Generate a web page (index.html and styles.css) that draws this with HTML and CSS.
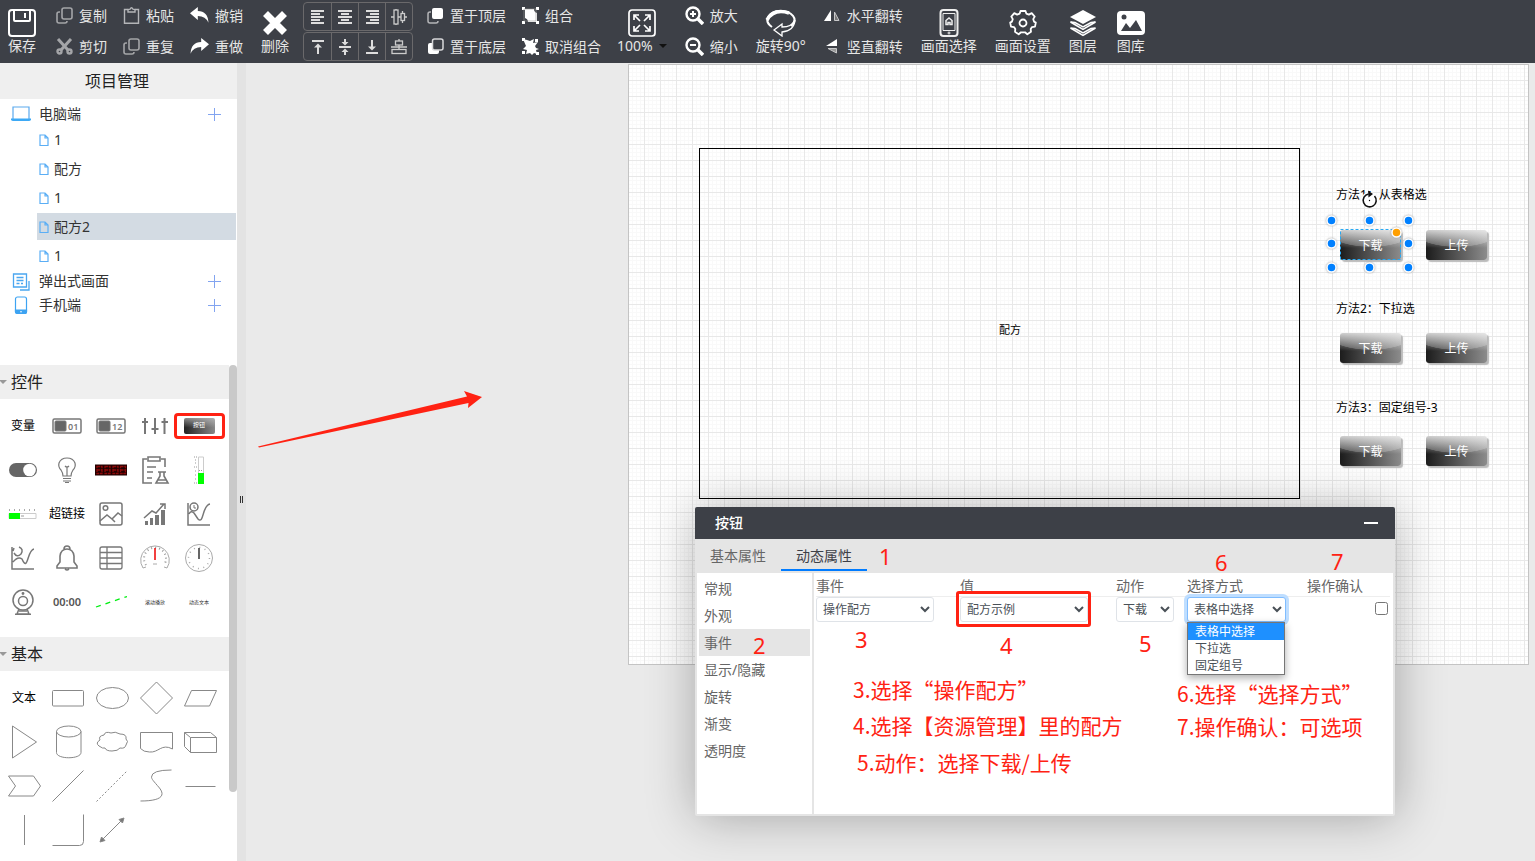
FILE: index.html
```html
<!DOCTYPE html>
<html lang="zh-CN">
<head>
<meta charset="utf-8">
<title>画面编辑器</title>
<link rel="stylesheet" href="styles.css">
</head>
<body>
<header class="toolbar">
  <button class="tool">
    <svg width="28" height="28" viewBox="0 0 28 28" fill="none" stroke="#fff" stroke-width="2"><rect x="1" y="1" width="26" height="26" rx="3"/><path d="M6 1v10q0 1 1 1h14q1 0 1-1V1M17 4v5"/></svg>
    <span>保存</span>
  </button>
  <div class="pair space-l">
    <button class="mini"><svg class="ic" viewBox="0 0 17 17" fill="none" stroke="#a4a5a8" stroke-width="1.6"><rect x="6" y="1" width="10" height="11" rx="2"/><path d="M4 5H3q-2 0-2 2v7q0 2 2 2h6q2 0 2-2"/></svg>复制</button>
    <button class="mini"><svg class="ic" viewBox="0 0 17 17" fill="none" stroke="#a4a5a8" stroke-width="3"><path d="M2 1l10 11M15 1L5 12"/><circle cx="3.5" cy="13.5" r="2" stroke-width="2.4"/><circle cx="13.5" cy="13.5" r="2" stroke-width="2.4"/></svg>剪切</button>
  </div>
  <div class="pair space-s">
    <button class="mini"><svg class="ic" viewBox="0 0 17 17" fill="none" stroke="#b4b5b8" stroke-width="1.4"><path d="M5 2.5H1.5v13.8h14V2.5H12M5 5V2.5l2-.3q1.5-3 3 0l2 .3V5z"/></svg>粘贴</button>
    <button class="mini"><svg class="ic" viewBox="0 0 17 17" fill="none" stroke="#a4a5a8" stroke-width="1.6"><rect x="6" y="1" width="10" height="11" rx="2"/><path d="M4 5H3q-2 0-2 2v7q0 2 2 2h6q2 0 2-2"/></svg>重复</button>
  </div>
  <div class="pair space-s">
    <button class="mini"><svg class="ic ic-w" viewBox="0 0 17 17" fill="#fff"><path d="M0 6.500L7 1v3.500q9 0 9.500 10.500Q14 9 7 9v3.500z"/></svg>撤销</button>
    <button class="mini"><svg class="ic ic-w" viewBox="0 0 17 17" fill="#fff"><path d="M17 6.500L10 1v3.500Q1 4.500 .5 15 3 9 10 9v3.500z"/></svg>重做</button>
  </div>
  <button class="tool space-m">
    <svg width="28" height="28" viewBox="0 0 28 28" stroke="#fff" stroke-width="7"><path d="M4.500 4.500l19 19M23.500 4.500l-19 19"/></svg>
    <span>删除</span>
  </button>
  <div class="pair align space-xs">
    <div class="strip">
      <button aria-label="左对齐"><svg viewBox="0 0 16 16" stroke="#ddd" stroke-width="2"><path d="M1 2h13M1 5h9M1 8h13M1 11h9M1 14h13"/></svg></button>
      <button aria-label="水平居中"><svg viewBox="0 0 16 16" stroke="#ddd" stroke-width="2"><path d="M1 2h14M4 5h8M1 8h14M4 11h8M1 14h14"/></svg></button>
      <button aria-label="右对齐"><svg viewBox="0 0 16 16" stroke="#ddd" stroke-width="2"><path d="M2 2h13M6 5h9M2 8h13M6 11h9M2 14h13"/></svg></button>
      <button aria-label="水平分布"><svg viewBox="0 0 16 16" fill="none" stroke="#ccc" stroke-width="1.3"><path d="M0 8h3M7 8h3M13 8h3M5 0v1M5 15v1M11.500 2v2M11.500 12v2"/><rect x="3" y="1" width="4" height="14"/><rect x="10" y="4.500" width="3.500" height="7"/></svg></button>
    </div>
    <div class="strip">
      <button aria-label="顶对齐"><svg viewBox="0 0 16 16" fill="#ddd" stroke="#ddd" stroke-width="2"><path d="M2 2h12M8 15V7"/><path d="M4 8.500l4-4 4 4z" stroke="none"/></svg></button>
      <button aria-label="垂直居中"><svg viewBox="0 0 16 16" fill="#ddd" stroke="#ddd" stroke-width="2"><path d="M2 8h12M8 0v4M8 12v4"/><path d="M4.500 3h7L8 6.500zM4.500 13h7L8 9.500z" stroke="none"/></svg></button>
      <button aria-label="底对齐"><svg viewBox="0 0 16 16" fill="#ddd" stroke="#ddd" stroke-width="2"><path d="M2 14h12M8 1v8"/><path d="M4 7.500h8l-4 4z" stroke="none"/></svg></button>
      <button aria-label="垂直分布"><svg viewBox="0 0 16 16" fill="none" stroke="#ccc" stroke-width="1.3"><path d="M8 0v2M8 6v4M0 8h3M13 8h3M3 8h10"/><rect x="4.500" y="2" width="7" height="4"/><rect x="1" y="10.500" width="14" height="4"/></svg></button>
    </div>
  </div>
  <div class="pair space-xs">
    <button class="mini"><svg class="ic" viewBox="0 0 17 17" fill="none" stroke="#b4b5b8" stroke-width="1.5"><path d="M4 5H3q-2 0-2 2v7q0 2 2 2h6q2 0 2-2"/><rect x="5" y="1" width="11" height="11" rx="2" fill="#fff" stroke="none"/></svg>置于顶层</button>
    <button class="mini"><svg class="ic" viewBox="0 0 17 17" fill="none" stroke="#d8d8da" stroke-width="1.5"><rect x="1" y="5" width="11" height="11" rx="2" fill="#fff" stroke="none"/><rect x="5.500" y="1" width="10.500" height="11" rx="2" fill="#3d4047"/></svg>置于底层</button>
  </div>
  <div class="pair space-s">
    <button class="mini"><svg class="ic" viewBox="0 0 17 17" fill="#fff"><path d="M3 2h9q0 3 3 4v9H6q0-3-3-4z"/><path d="M0 0h3v3H0zM14 0h3v3h-3zM0 14h3v3H0zM14 14h3v3h-3z"/><path d="M2 2h12v12H2z" fill="none" stroke="#999" stroke-width=".6"/></svg>组合</button>
    <button class="mini"><svg class="ic" viewBox="0 0 17 17" fill="#fff"><path d="M1 1l4 1 3 1 4-2-1 4 5-1-3 4 1 2 3 1-3 1 1 4-3-1-2 2-2-2-4 1 1-4-4-1 3-3z"/><path d="M0 0h3v3H0zM13 1h3v3h-3zM0 13h3v3H0zM14 14h3v3h-3z"/></svg>取消组合</button>
  </div>
  <button class="tool space-s">
    <svg width="28" height="28" viewBox="0 0 28 28" fill="none" stroke="#fff" stroke-width="1.7"><rect x="1" y="1" width="26" height="26" rx="3"/><path d="M12 12L6 6M6 11V6h5M16 12l6-6M17 6h5v5M12 16l-6 6M6 17v5h5M16 16l6 6M22 17v5h-5"/></svg>
    <span>100% <i class="caret"></i></span>
  </button>
  <div class="pair space-m">
    <button class="mini"><svg class="ic ic-w" viewBox="0 0 19 19" fill="none" stroke="#fff" stroke-width="2.4"><circle cx="8" cy="8" r="6.500"/><path d="M8 5v6M5 8h6" stroke-width="2"/><path d="M13 13l5 5" stroke-width="3.500"/></svg>放大</button>
    <button class="mini"><svg class="ic ic-w" viewBox="0 0 19 19" fill="none" stroke="#fff" stroke-width="2.4"><circle cx="8" cy="8" r="6.500"/><path d="M5 8h6" stroke-width="2"/><path d="M13 13l5 5" stroke-width="3.500"/></svg>缩小</button>
  </div>
  <button class="tool space-m">
    <svg width="32" height="28" viewBox="0 0 32 28" fill="none" stroke="#fff"><path d="M7 18C-3 11 5 2 15 2c12 0 19 8 11 15" stroke-width="2"/><path d="M2 11Q9-1 24 4" stroke-width="3.500"/><path d="M9 21l8-6v3q10 0 13-7-1 11-13 12v4z" stroke-width="1.3"/></svg>
    <span>旋转90°</span>
  </button>
  <div class="pair space-m">
    <button class="mini"><svg class="ic" viewBox="0 0 17 17" fill="#fff"><path d="M7 3v11H0z"/><path d="M10.500 5v8.500H15z" fill="#777" stroke="#c8c8ca"/></svg>水平翻转</button>
    <button class="mini"><svg class="ic" viewBox="0 0 17 17" fill="#fff"><path d="M2 8h11V1z"/><path d="M4 10.500h8.500V15z" fill="#999" stroke="#c8c8ca"/></svg>竖直翻转</button>
  </div>
  <button class="tool space-m">
    <svg width="28" height="28" viewBox="0 0 28 28" fill="none" stroke="#eee" stroke-width="2"><rect x="5.500" y="1" width="17" height="26" rx="3"/><path d="M8 4.500h12v17H8z" stroke-width="1"/><path d="M11 15.500v-4L14 9l3 2.500v4h-2v-2h-2v2z" stroke-width="1.500"/><circle cx="14" cy="24" r="1" stroke-width="1"/></svg>
    <span>画面选择</span>
  </button>
  <button class="tool space-m">
    <svg width="28" height="28" viewBox="-14 -14 28 28" fill="none" stroke="#fff" stroke-width="1.8" stroke-linejoin="round"><path d="M-2.500-12h5l.8 2.600 2.600 1 2.800-1.500 3 3.500-1.500 2.500 .8 2.500 1.800 1-.8 4-3 .5-1.300 2 .3 2.700-3.700 2.500-2.300-2h-4l-2.300 2-3.700-2.500.3-2.700L-9 4.100l-3-.5-.8-4 1.800-1 .8-2.500-1.500-2.500 3-3.500 2.800 1.500 2.600-1z"/><circle r="3.500"/></svg>
    <span>画面设置</span>
  </button>
  <button class="tool space-m">
    <svg width="28" height="28" viewBox="0 0 28 28" fill="none" stroke="#fff"><path d="M14 1l13 7-13 7L1 8z" fill="#fff" stroke="none"/><path d="M1.500 13l4.500.5 8 4.500 8-4.500 4.500-.5L14 20.500zM1.500 19l4.500.5 8 4.500 8-4.500 4.500-.5L14 26.500z" stroke-width="1.500"/></svg>
    <span>图层</span>
  </button>
  <button class="tool space-l">
    <svg width="28" height="28" viewBox="0 0 28 28"><rect y="2" width="28" height="24" rx="4" fill="#fff"/><circle cx="7" cy="8" r="2.500" fill="#3d4047"/><path d="M4 22l5-8 4 5 6-8 6 11z" fill="#3d4047"/></svg>
    <span>图库</span>
  </button>
</header>

<main class="main">
  <aside class="sidebar">
    <h1 class="side-title">项目管理</h1>
    <nav class="tree">
      <div class="branch">
        <svg class="bi" viewBox="0 0 20 20" fill="none" stroke="#5aa9ee" stroke-width="1.2"><path d="M2 15V3h16v12"/><path d="M0 14.500h20V16q-1 1-2 1H2q-1 0-2-1z" fill="#3da9f5" stroke="none"/></svg>
        <span>电脑端</span><button class="add" aria-label="添加电脑端画面"></button>
      </div>
      <a class="leaf" href="#"><svg class="fi" viewBox="0 0 10 12" fill="none" stroke="#5aaef5" stroke-width="1.2"><path d="M1 1h5l3 3v7.500H1zM6 1v3h3"/></svg>1</a>
      <a class="leaf" href="#"><svg class="fi" viewBox="0 0 10 12" fill="none" stroke="#5aaef5" stroke-width="1.2"><path d="M1 1h5l3 3v7.500H1zM6 1v3h3"/></svg>配方</a>
      <a class="leaf" href="#"><svg class="fi" viewBox="0 0 10 12" fill="none" stroke="#5aaef5" stroke-width="1.2"><path d="M1 1h5l3 3v7.500H1zM6 1v3h3"/></svg>1</a>
      <a class="leaf current" href="#"><svg class="fi" viewBox="0 0 10 12" fill="none" stroke="#5aaef5" stroke-width="1.2"><path d="M1 1h5l3 3v7.500H1zM6 1v3h3"/></svg>配方2</a>
      <a class="leaf" href="#"><svg class="fi" viewBox="0 0 10 12" fill="none" stroke="#5aaef5" stroke-width="1.2"><path d="M1 1h5l3 3v7.500H1zM6 1v3h3"/></svg>1</a>
      <div class="branch">
        <svg class="bi" viewBox="0 0 20 20" fill="none" stroke="#4aa6f0" stroke-width="1.3"><path d="M2.500 3h13v13h-13zM18 10v9H9"/><path d="M5.500 6.500h7M5.500 9.500h7M5.500 12.500h3M10 12.500h2"/></svg>
        <span>弹出式画面</span><button class="add" aria-label="添加弹出式画面"></button>
      </div>
      <div class="branch">
        <svg class="bi" viewBox="0 0 20 20" fill="none" stroke="#3da3f2" stroke-width="1.2"><rect x="4.500" y="2" width="11" height="16.500" rx="2"/><path d="M4.500 15h11v2q0 1.500-2 1.500h-7q-2 0-2-1.500z" fill="#3da3f2"/><circle cx="10" cy="16.700" r=".8" fill="#fff" stroke="none"/></svg>
        <span>手机端</span><button class="add" aria-label="添加手机端画面"></button>
      </div>
    </nav>

    <section class="library">
      <div class="shelves">
        <h2 class="shelf-title">控件</h2>
        <div class="palette">
          <button class="cell">变量</button>
          <button class="cell"><svg viewBox="0 0 32 32" fill="none" stroke="#777"><rect x="2" y="9" width="28" height="14" rx="1.500" stroke-width="1.500"/><rect x="4" y="11" width="11" height="10" rx="1" fill="#666"/><text x="17" y="19.500" class="num">01</text></svg></button>
          <button class="cell"><svg viewBox="0 0 32 32" fill="none" stroke="#777"><rect x="2" y="9" width="28" height="14" rx="1.500" stroke-width="1.500"/><rect x="4" y="11" width="11" height="10" rx="1" fill="#666"/><text x="17" y="19.500" class="num">12</text></svg></button>
          <button class="cell" aria-label="滑块"><svg viewBox="0 0 32 32" stroke="#777" stroke-width="2"><path d="M6 8v16M16 8v16M25.500 8v16M3 12h6M12.500 19h7M22.500 12h6.500"/></svg></button>
          <button class="cell marked"><span class="thumb-button">按钮</span></button>
          <button class="cell" aria-label="开关"><svg viewBox="0 0 32 32"><rect x="2" y="9" width="28" height="14" rx="7" fill="#666"/><circle cx="22.500" cy="16" r="6.300" fill="#fff"/></svg></button>
          <button class="cell" aria-label="指示灯"><svg viewBox="0 0 32 32" fill="none" stroke="#777" stroke-width="1.2"><path d="M12 22q0-3-2-6-3-3-2-7 2-5 8-5t8 5q1 4-2 7-2 3-2 6zM16 13v9M14 12q2 2 4 0M12 24.500h8M12 27h8M14 28.500h4"/></svg></button>
          <button class="cell" aria-label="数码管"><svg viewBox="0 0 32 32"><path fill="#200" d="M0 10.500h32v11H0z"/><path fill="none" stroke="#8c0808" stroke-width="1.3" stroke-dasharray="3 .7" d="M2 12.500h5v7H2zM2 16h5M10 12.500h5v7h-5zM10 16h5M18 12.500h5v7h-5zM18 16h5M25.500 12.500h5v7h-5zM25.500 16h5"/></svg></button>
          <button class="cell" aria-label="报表"><svg viewBox="0 0 32 32" fill="none" stroke="#777" stroke-width="1.6"><path d="M8 5H4v24h9M22 5h4v8M9 3h12v4H9zM8 13h9M8 18h6M8 24h5M19 18h8M21 18v4l-4 7h12l-4-7v-4M19 26h8"/></svg></button>
          <button class="cell" aria-label="竖向液位"><svg viewBox="0 0 32 32"><path fill="none" stroke="#ccc" d="M15.500 3v26h5V3z"/><path stroke="#999" d="M16 16.500h4M11 3h3M12 6h2M12 9h2M11 13h3M12 17h2M12 21h2M12 25h2M11 29h3" stroke-dasharray="1 1"/><path fill="#0f0" d="M15 19h6v11h-6z"/></svg></button>
          <button class="cell" aria-label="横向液位"><svg viewBox="0 0 32 32"><path fill="none" stroke="#ccc" d="M2 15.500h27v5H2z"/><path stroke="#aaa" stroke-width="2" stroke-dasharray="1 4" d="M2 12h28"/><path fill="#0f0" d="M2 15h11v6H2z"/><path stroke="#999" d="M14 18h3"/></svg></button>
          <button class="cell">超链接</button>
          <button class="cell" aria-label="图片"><svg viewBox="0 0 32 32" fill="none" stroke="#777" stroke-width="1.5"><rect x="5" y="5" width="22" height="22" rx="2"/><circle cx="10.500" cy="10" r="2.300"/><path d="M5 23l7-6 5 4 6-6 4 3M17 21l3 3"/></svg></button>
          <button class="cell" aria-label="柱状图"><svg viewBox="0 0 32 32"><path fill="#777" d="M6 23h3v4H6zM11 20h3v7h-3zM16 17h4v10h-4zM22 12h4v15h-4z"/><path fill="none" stroke="#777" stroke-width="1.5" d="M5 20l8-7 4 2 8-9M21 6h5v5"/></svg></button>
          <button class="cell" aria-label="实时曲线"><svg viewBox="0 0 32 32" fill="none" stroke="#777" stroke-width="1.5"><path d="M5 5v22h22M6 16q2-4 5-1l4 6c6 6 4-14 12-15"/><circle cx="11" cy="9" r="4"/><path d="M11 7v3h2" stroke-width="1"/></svg></button>
          <button class="cell" aria-label="历史曲线"><svg viewBox="0 0 32 32" fill="none" stroke="#777" stroke-width="1.5"><path d="M5 5v22h22M6 20q5-6 9-3c6 14 5-9 12-10M7 11q3 5 7 1 3-5-2-7M6 9l1-3"/></svg></button>
          <button class="cell" aria-label="报警"><svg viewBox="0 0 32 32" fill="none" stroke="#777" stroke-width="1.6"><path d="M6 26v-2l3-4v-6q1-7 7-7t7 7v6l3 4v2zM13 7q0-3 3-3t3 3M14 27q2 2 4 0"/></svg></button>
          <button class="cell" aria-label="表格"><svg viewBox="0 0 32 32" fill="none" stroke="#777" stroke-width="1.3"><rect x="5" y="5" width="22" height="22" rx="2"/><path d="M5 10.500h22M5 16h22M5 21.500h22M12 5v22"/></svg></button>
          <button class="cell" aria-label="仪表盘"><svg viewBox="0 0 32 32" fill="none" stroke="#aaa"><path d="M4 26a14.300 14.300 0 1 1 24 0l-3-1M4 26l3-1"/><path stroke="#999" stroke-width="2" stroke-dasharray="1 3" d="M7 23a11 11 0 1 1 18 0"/><path d="M16 6v12" stroke="#e00" stroke-width="1.500"/><path d="M14 22h4"/></svg></button>
          <button class="cell" aria-label="时钟"><svg viewBox="0 0 32 32" fill="none" stroke="#aaa"><circle cx="16" cy="16" r="13.500"/><circle cx="16" cy="16" r="10.500" stroke-width="1.500" stroke-dasharray="1 4.500"/><path d="M16 6v11" stroke="#333" stroke-width="1.500"/></svg></button>
          <button class="cell" aria-label="摄像头"><svg viewBox="0 0 32 32" fill="none" stroke="#777" stroke-width="1.5"><circle cx="16" cy="14" r="10"/><circle cx="16" cy="15" r="4.500"/><circle cx="16" cy="7.500" r=".7"/><path d="M12 23l-2 5h12l-2-5M8 28.300h16M12 25h8"/></svg></button>
          <button class="cell time">00:00</button>
          <button class="cell" aria-label="流动线"><svg viewBox="0 0 32 32"><path d="M1 21L32 10.500" stroke="#0e1" stroke-width="1.3" stroke-dasharray="5 5"/></svg></button>
          <button class="cell tiny">滚动播放</button>
          <button class="cell tiny">动态文本</button>
        </div>
        <h2 class="shelf-title">基本</h2>
        <div class="palette shapes">
          <button class="cell">文本</button>
          <button class="cell" aria-label="矩形"><svg viewBox="0 0 34 34"><rect x="1.500" y="9.500" width="31" height="15.500" rx="1"/></svg></button>
          <button class="cell" aria-label="椭圆"><svg viewBox="0 0 34 34"><ellipse cx="17.500" cy="17" rx="16" ry="10.500"/></svg></button>
          <button class="cell" aria-label="菱形"><svg viewBox="0 0 34 34"><path d="M17.500 1l16 16-16 16-16-16z"/></svg></button>
          <button class="cell" aria-label="平行四边形"><svg viewBox="0 0 34 34"><path d="M8.500 9.500h25l-7 15.500h-25z"/></svg></button>
          <button class="cell" aria-label="三角形"><svg viewBox="0 0 34 34"><path d="M5.500 1v32l24-16z"/></svg></button>
          <button class="cell" aria-label="圆柱"><svg viewBox="0 0 34 34"><path d="M5.500 6.500v21c0 7 24.500 7 24.500 0v-21"/><ellipse cx="17.750" cy="6.500" rx="12.250" ry="5.500"/></svg></button>
          <button class="cell" aria-label="云"><svg viewBox="0 0 34 34"><path d="M9 10q-6 1-4 5-5 3-1 6 4 3 6 2 1 3 7 3 6 0 8-3 5 1 6-3 3-4 0-6 1-5-6-5-5-3-9-1-6-2-7 2z"/></svg></button>
          <button class="cell" aria-label="文档"><svg viewBox="0 0 34 34"><path d="M1.500 7.500h32V24c-11-6-14 4-23 3q-6 0-9-3.500z"/></svg></button>
          <button class="cell" aria-label="立方体"><svg viewBox="0 0 34 34"><path d="M1.500 7.500h26l6 5v15h-26l-6-6zM1.500 7.500l6 5h26M7.500 12.500v15"/></svg></button>
          <button class="cell" aria-label="步骤"><svg viewBox="0 0 34 34"><path d="M1.500 7h25l7 10-7 10h-25l7-10z"/></svg></button>
          <button class="cell" aria-label="直线"><svg viewBox="0 0 34 34"><path d="M1.500 32.500l31-31"/></svg></button>
          <button class="cell" aria-label="虚线"><svg viewBox="0 0 34 34"><path d="M1.500 32.500l31-31" stroke-dasharray="2 2"/></svg></button>
          <button class="cell" aria-label="曲线"><svg viewBox="0 0 34 34"><path d="M1.500 32c18 0 26-4 19-13-6-7-8-9-8-11q0-7 20-7"/></svg></button>
          <button class="cell" aria-label="水平线"><svg viewBox="0 0 34 34"><path d="M2.500 17.500h30"/></svg></button>
          <button class="cell" aria-label="垂直线"><svg viewBox="0 0 34 34"><path d="M17.500 2v30"/></svg></button>
          <button class="cell" aria-label="折线"><svg viewBox="0 0 34 34"><path d="M32.500 1.500v27q0 4-4 4h-27"/></svg></button>
          <button class="cell" aria-label="双向箭头"><svg viewBox="0 0 34 34"><path d="M6 28L28 6"/><path d="M29 5l-1.500 5-3.500-3.500zM5 29l1.500-5 3.500 3.500z" fill="#777"/></svg></button>
        </div>
      </div>
      <div class="scroll-track"><div class="scroll-thumb"></div></div>
    </section>
  </aside>

  <div class="splitter"><span class="grip"></span></div>

  <section class="stage">
    <svg class="pointer" viewBox="0 0 226 62"><path d="M0 59.500L209 9.500 206 4l18 6-14 11 .5-5L1 60.500z" fill="#ff2213"/></svg>
    <div class="sheet">
      <div class="frame"></div>
      <span class="note frame-name">配方</span>
      <span class="note label row1">方法1：从表格选</span>
      <button class="pill down row1">下载</button>
      <button class="pill up row1">上传</button>
      <span class="note label row2">方法2：下拉选</span>
      <button class="pill down row2">下载</button>
      <button class="pill up row2">上传</button>
      <span class="note label row3">方法3：固定组号-3</span>
      <button class="pill down row3">下载</button>
      <button class="pill up row3">上传</button>
      <svg class="selection" viewBox="0 0 96 90">
        <rect x="17.500" y="45.500" width="60" height="30" fill="none" stroke="#29a9f2" stroke-dasharray="3 2"/>
        <circle cx="46.500" cy="16" r="8" fill="#fff"/>
        <path d="M51.500 12a6.500 6.500 0 1 1-6-2" fill="none" stroke="#111" stroke-width="1.600"/>
        <path d="M45 6.500l5 3.500-4.500 3.500z" fill="#111"/><circle cx="46.500" cy="16.500" r=".7"/>
        <g class="handles"><circle cx="8.500" cy="36.500" r="4.500"/><circle cx="46.500" cy="36.500" r="4.500"/><circle cx="85.500" cy="36.500" r="4.500"/><circle cx="8.500" cy="59.500" r="4.500"/><circle cx="85.500" cy="59.500" r="4.500"/><circle cx="8.500" cy="83.500" r="4.500"/><circle cx="46.500" cy="83.500" r="4.500"/><circle cx="85.500" cy="83.500" r="4.500"/><circle class="orange" cx="73.500" cy="48.500" r="4.500"/></g>
      </svg>
    </div>

    <section class="dialog">
      <header class="dialog-head"><span>按钮</span><button class="minimize" aria-label="最小化"></button></header>
      <div class="tabs"><button class="tab">基本属性</button><button class="tab active">动态属性</button></div>
      <div class="dialog-body">
        <nav class="props">
          <button>常规</button><button>外观</button><button class="on">事件</button><button>显示/隐藏</button><button>旋转</button><button>渐变</button><button>透明度</button>
        </nav>
        <div class="detail">
          <table class="events">
            <thead><tr><th class="c-event">事件</th><th class="c-value">值</th><th class="c-action">动作</th><th class="c-mode">选择方式</th><th class="c-confirm">操作确认</th></tr></thead>
            <tbody><tr>
              <td><select class="s-event" aria-label="事件"><option>操作配方</option></select></td>
              <td><select class="s-value" aria-label="值"><option>配方示例</option></select></td>
              <td><select class="s-action" aria-label="动作"><option>下载</option><option>上传</option></select></td>
              <td class="mode-cell"><select class="s-mode" aria-label="选择方式"><option>表格中选择</option><option>下拉选</option><option>固定组号</option></select>
                <ul class="menu"><li class="picked">表格中选择</li><li>下拉选</li><li>固定组号</li></ul></td>
              <td class="confirm-cell"><input type="checkbox" aria-label="操作确认"></td>
            </tr></tbody>
          </table>
        </div>
      </div>
      <div class="red-box"></div>
      <span class="mark m1">1</span><span class="mark m2">2</span><span class="mark m3">3</span><span class="mark m4">4</span><span class="mark m5">5</span><span class="mark m6">6</span><span class="mark m7">7</span>
      <p class="tip t3">3.选择“操作配方”</p>
      <p class="tip t4">4.选择【资源管理】里的配方</p>
      <p class="tip t5">5.动作：选择下载/上传</p>
      <p class="tip t6">6.选择“选择方式”</p>
      <p class="tip t7">7.操作确认：可选项</p>
    </section>
  </section>
</main>
</body>
</html>
```
FILE: styles.css
```css
* { box-sizing: border-box; }
body {
  margin: 0;
  height: 100vh;
  display: flex;
  flex-direction: column;
  overflow: hidden;
  font: 14px/20px "Noto Sans", "Noto Sans CJK SC", sans-serif;
  color: #333;
}
button { font: inherit; color: inherit; background: none; border: 0; padding: 0; margin: 0; }
svg { display: block; flex: none; }
h1, h2, p, ul { margin: 0; padding: 0; font-weight: 400; list-style: none; }

/* toolbar */
.toolbar { height: 63px; flex: none; display: flex; padding-left: 8px; background: #3d4047; color: #e6e6e6; white-space: nowrap; }
.tool { display: flex; flex-direction: column; align-items: center; padding-top: 9px; }
.tool > svg { height: 28px; }
.tool span { line-height: 18px; display: flex; align-items: center; gap: 6px; }
.space-xs { margin-left: 14px; }
.space-s { margin-left: 16px; }
.space-m { margin-left: 18px; }
.space-l { margin-left: 20px; }
.caret { border: 4px solid transparent; border-top-color: #111; border-bottom: 0; }
.pair { display: flex; flex-direction: column; }
.mini { height: 31px; display: flex; align-items: center; gap: 6px; }
.ic { width: 17px; height: 17px; }
.ic-w { width: 19px; height: 19px; }
.align { gap: 1px; padding-top: 2px; }
.strip { display: flex; height: 29px; border: 1px solid #6a696b; border-radius: 4px; }
.strip button { width: 27px; display: flex; align-items: center; justify-content: center; }
.strip button + button { border-left: 1px solid #6a696b; }
.strip svg { width: 16px; height: 16px; }

/* sidebar */
.main { flex: 1; min-height: 0; display: flex; }
.sidebar { width: 237px; flex: none; display: flex; flex-direction: column; background: #fff; }
.side-title { font-size: 16px; line-height: 36px; text-align: center; background: #efefef; padding-right: 3px; color: #222; }
.tree { height: 266px; flex: none; padding-top: 3px; }
.branch { height: 24px; display: flex; align-items: center; padding: 0 16px 0 11px; }
.bi { width: 20px; height: 20px; margin-right: 8px; }
.add { width: 13px; height: 13px; margin-left: auto; background: linear-gradient(#82a4f0, #82a4f0) center / 13px 1px no-repeat, linear-gradient(#82a4f0, #82a4f0) center / 1px 13px no-repeat; }
.leaf { display: flex; align-items: center; gap: 5px; height: 27px; margin: 0 1px 0 37px; padding-left: 2px; color: #333; text-decoration: none; }
.leaf + .leaf { margin-top: 2px; }
.leaf.current { background: #d3dbe3; }
.fi { width: 10px; height: 12px; }
.library { flex: 1; min-height: 0; display: flex; }
.shelves { flex: 1; overflow: hidden; }
.shelf-title { display: flex; align-items: center; gap: 4px; height: 34px; background: #efefef; font-size: 16px; color: #222; }
.shelf-title::before { content: ""; margin-left: -1px; border: 4px solid transparent; border-top-color: #999; border-bottom: 0; }
.palette { display: grid; grid-template-columns: repeat(5, 44px); grid-auto-rows: 44px; padding: 5px 0 13px 1px; }
.cell { display: flex; align-items: center; justify-content: center; position: relative; font-size: 12px; color: #000; white-space: nowrap; }
.cell svg { width: 32px; height: 32px; }
.shapes svg { width: 34px; height: 34px; fill: none; stroke: #888; }
.shapes { padding-left: 2px; }
.num { font: 600 9px "Noto Sans", sans-serif; fill: #777; stroke: none; }
.time { font-size: 11px; font-weight: 600; color: #555; }
.tiny { font-size: 5px; color: #333; }
.marked::after { content: ""; position: absolute; inset: 9px -4px 9px -3px; border: 3px solid #ff2213; border-radius: 4px; }
.thumb-button { width: 31px; height: 16px; border-radius: 2px; font-size: 6px; line-height: 15px; color: #fff; background: linear-gradient(#ccc9, #fff0 60%), linear-gradient(90deg, #222, #888); }
.scroll-track { width: 8px; }
.scroll-thumb { height: 86%; border-radius: 4px; background: #c9c9c9; }
.splitter { width: 9px; flex: none; background: #e3e3e3; padding: 433px 0 0 3px; }
.grip { display: block; width: 3px; height: 7px; border: 1px solid #333; border-width: 0 1px; }

/* drawing area */
.stage { flex: 1; position: relative; overflow: hidden; background: #eaeaea; }
.pointer { position: absolute; left: 12px; top: 324px; width: 226px; height: 62px; }
.sheet {
  position: absolute; left: 382px; top: 1px; width: 901px; height: 601px;
  border: 1px solid #c4c4c4;
  background-color: #fff;
  background-image: linear-gradient(90deg, #e8e8e8 1px, transparent 1px), linear-gradient(#e8e8e8 1px, transparent 1px), linear-gradient(90deg, #f9f9f9 1px, transparent 1px), linear-gradient(#f9f9f9 1px, transparent 1px);
  background-size: 16px 16px, 16px 16px, 4px 4px, 4px 4px;
  background-position: 15px 15px, 15px 15px, 3px 3px, 3px 3px;
}
.frame { position: absolute; left: 70px; top: 83px; width: 601px; height: 351px; border: 1px solid #000; }
.note { position: absolute; font-size: 12px; line-height: 18px; color: #000; white-space: nowrap; }
.frame-name { left: 370px; top: 256px; font-size: 11px; }
.label { left: 707px; }
.label.row1 { top: 121px; }
.label.row2 { top: 235px; }
.label.row3 { top: 334px; }
.pill {
  position: absolute; width: 61px; height: 30px; border-radius: 3px;
  font-size: 12px; line-height: 31px; color: #fff;
  background: radial-gradient(ellipse 44px 17px at 50% 0, #fff3 97%, #fff0), linear-gradient(#fffb, #fff0 60%), linear-gradient(90deg, #1c1c1c, #8c8c8c);
  box-shadow: 2px 2px 1px #bbb;
}
.down { left: 711px; }
.up { left: 797px; }
.pill.row1 { top: 165px; }
.pill.row2 { top: 268px; }
.pill.row3 { top: 371px; }
.selection { position: absolute; left: 694px; top: 119px; width: 96px; height: 90px; }
.handles { fill: #0080ff; stroke: #fff; stroke-width: 1.5; filter: drop-shadow(0 0 1px #999); }
.orange { fill: #ff9f00; }

/* property window */
.dialog { position: absolute; left: 449px; top: 444px; width: 700px; background: #e5e5e5; border-radius: 2px; box-shadow: 1px 1px 50px rgba(0, 0, 0, .3); color: #666; }
.dialog-head { display: flex; align-items: center; justify-content: space-between; height: 32px; padding: 0 17px 0 20px; background: #3d4047; color: #fff; border-radius: 2px 2px 0 0; font-weight: 500; }
.minimize { width: 14px; height: 2px; background: #fff; }
.tabs { display: flex; height: 34px; }
.tab { height: 32px; padding: 4px 15px 0; border-bottom: 2px solid transparent; }
.tab.active { border-color: #007bff; color: #3d4047; }
.dialog-body { display: flex; gap: 2px; height: 243px; padding: 0 2px 2px; }
.props { width: 115px; padding: 2px; background: #fff; display: flex; flex-direction: column; }
.props button { height: 27px; padding-left: 5px; text-align: left; }
.props .on { background: #e5e5e5; }
.detail { flex: 1; background: #fff; padding: 3px 0 0 2px; }
.events { border-collapse: collapse; table-layout: fixed; width: 574px; }
.events th { padding: 0; height: 20px; font-weight: 400; text-align: left; border-bottom: 1px solid #eee; }
.events td { padding: 0; }
.c-event { width: 144px; }
.c-value { width: 156px; }
.c-action { width: 71px; }
.c-mode { width: 120px; }
select { display: block; height: 25px; padding: 0 2px; border: 1px solid #dfe3e8; border-radius: 3px; background: #fff; color: #495057; font: 12px "Noto Sans", "Noto Sans CJK SC", sans-serif; }
.s-event { width: 118px; }
.s-value { width: 128px; }
.s-action { width: 58px; }
.s-mode { width: 99px; border-color: #80bdff; box-shadow: 0 0 0 3px #bfdeff; }
.mode-cell { position: relative; }
.menu { position: absolute; left: 0; top: 25px; width: 98px; border: 1px solid #767676; background: #fff; color: #495057; font-size: 12px; line-height: 17px; box-shadow: 0 3px 8px #0005; }
.menu li { padding-left: 7px; }
.menu .picked { background: #1e90ff; color: #fff; }
.confirm-cell input { display: block; margin: 0 2px 2px auto; width: 13px; height: 13px; }
.red-box { position: absolute; left: 261px; top: 84px; width: 135px; height: 36px; border: 3px solid #ff2213; border-radius: 3px; }
.mark, .tip { position: absolute; color: #ff2213; line-height: 30px; white-space: nowrap; }
.mark { font-size: 22px; }
.tip { font-size: 21px; font-family: "Noto Sans CJK SC", sans-serif; }
.m1 { left: 184px; top: 34px; }
.m2 { left: 58px; top: 123px; }
.m3 { left: 160px; top: 117px; }
.m4 { left: 305px; top: 123px; }
.m5 { left: 444px; top: 121px; }
.m6 { left: 520px; top: 40px; }
.m7 { left: 636px; top: 39px; }
.t3 { left: 158px; top: 167px; }
.t4 { left: 158px; top: 203px; }
.t5 { left: 162px; top: 240px; }
.t6 { left: 482px; top: 171px; }
.t7 { left: 482px; top: 204px; }
```
